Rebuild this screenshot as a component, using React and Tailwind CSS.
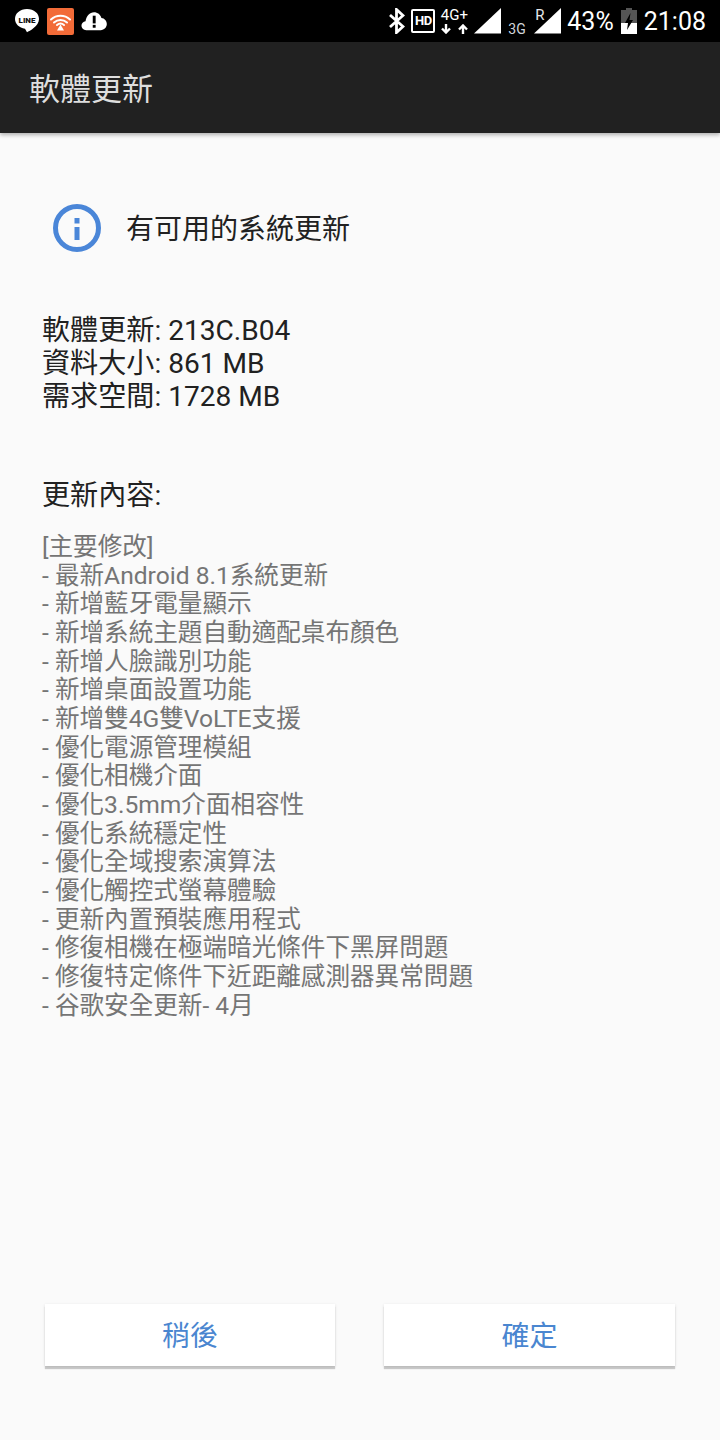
const fontCls = "font-['Roboto','Noto_Sans_CJK_TC',sans-serif]";

const changes = [
  "[主要修改]",
  "- 最新Android 8.1系統更新",
  "- 新增藍牙電量顯示",
  "- 新增系統主題自動適配桌布顏色",
  "- 新增人臉識別功能",
  "- 新增桌面設置功能",
  "- 新增雙4G雙VoLTE支援",
  "- 優化電源管理模組",
  "- 優化相機介面",
  "- 優化3.5mm介面相容性",
  "- 優化系統穩定性",
  "- 優化全域搜索演算法",
  "- 優化觸控式螢幕體驗",
  "- 更新內置預裝應用程式",
  "- 修復相機在極端暗光條件下黑屏問題",
  "- 修復特定條件下近距離感測器異常問題",
  "- 谷歌安全更新- 4月",
];

const buttonCls = "h-[62px] pt-[4px] bg-white text-[#4a86d0] text-[28px] shadow-[0_3px_1px_rgba(0,0,0,0.18),0_1px_3px_rgba(0,0,0,0.12)]";

function Signal() {
  return (
    <svg width="27" height="26" viewBox="0 0 27 26" className="shrink-0">
      <path d="M0 25.500L27 0v25.500z" fill="#fff" />
    </svg>
  );
}

function StatusBar() {
  return (
    <div className="h-[42px] bg-black flex items-center justify-between pl-[14px] pr-[14px] text-white">
      <div className="flex items-center gap-[7px]">
        {/* LINE bubble */}
        <svg width="26" height="26" viewBox="0 0 26 26">
          <path d="M13 1C6 1 1 5.400 1 11c0 5.200 4.300 8.800 10 9.700l2 3.600c2.500-1.400 12-6 12-13.300C25 5.400 20 1 13 1z" fill="#fff" />
          <text x="13" y="14.500" textAnchor="middle" fontSize="8" fontWeight="900" fill="#111" fontFamily="Roboto">LINE</text>
        </svg>
        {/* wifi app tile */}
        <svg width="27" height="27" viewBox="0 0 27 27">
          <rect width="27" height="27" rx="2" fill="#f26b38" />
          <path d="M4 11.500c5.500-5 13.500-5 19 0M7 14.500c3.800-3.300 9.200-3.300 13 0M10 17c2-1.700 5-1.700 7 0" fill="none" stroke="#fff" strokeWidth="2" strokeLinecap="round" />
          <path d="M13.500 16.500l3.500 6h-7z" fill="#fff" />
        </svg>
        {/* cloud with alert */}
        <svg width="26" height="20" viewBox="0 0 27 20">
          <path d="M5.500 19.500C2.500 19.500 0.500 17.300 0.500 14.800c0-2.400 1.800-4.300 4.200-4.600C5.700 4.600 9 1 13.500 1c3.700 0 6.800 2.500 7.700 6 3.200 0.300 5.600 2.900 5.600 6.200 0 3.500-2.800 6.300-6.300 6.300z" fill="#fff" />
          <rect x="12.200" y="4.500" width="3" height="8" fill="#000" />
          <rect x="12.200" y="14" width="3" height="3" fill="#000" />
        </svg>
      </div>
      <div className={`flex items-center ${fontCls}`}>
        {/* bluetooth */}
        <svg width="17" height="26" viewBox="0 0 17 26" className="mr-[6px]">
          <path d="M2 7l13 11.500-6.500 6V1.500l6.500 6L2 19" fill="none" stroke="#fff" strokeWidth="2.800" />
        </svg>
        <div className="w-[24px] h-[24px] border-2 border-white rounded-[2px] flex items-center justify-center text-[13px] font-bold tracking-[-0.5px] mr-[6px]">HD</div>
        <div className="flex flex-col items-center w-[26px] mr-[7px] leading-none">
          <span className="text-[15px] leading-[14px] font-normal">4G+</span>
          <div className="flex gap-[7px] mt-[2px]">
            {/* data arrows */}
            <svg width="10" height="10" viewBox="0 0 10 10">
              <path d="M5 0v8M1 4.500l4 4 4-4" fill="none" stroke="#fff" strokeWidth="2.400" />
            </svg>
            <svg width="10" height="10" viewBox="0 0 10 10">
              <path d="M5 10V2M1 5.500l4-4 4 4" fill="none" stroke="#fff" strokeWidth="2.400" />
            </svg>
          </div>
        </div>
        <Signal />
        <span className="w-[17px] ml-[7px] mr-[9px] text-[14px] self-end -mb-[2px] text-gray-300 leading-none">3G</span>
        <div className="relative w-[27px] h-[26px] mr-[6px]">
          <Signal />
          <span className="absolute left-[1px] top-[0px] text-[15px] leading-none text-gray-200">R</span>
        </div>
        <span className="text-[25px] leading-none mr-[7px]">43%</span>
        {/* battery charging */}
        <svg width="16" height="26" viewBox="0 0 16 26" className="mr-[7px]">
          <rect x="5" y="0" width="6" height="3" fill="#555" />
          <rect x="0" y="2" width="16" height="13" fill="#555" />
          <rect x="0" y="15" width="16" height="11" fill="#fff" />
          <path d="M9.500 5L4 15h3l-1 7 6-10H8.500z" fill="#000" />
        </svg>
        <span className="text-[25px] leading-none">21:08</span>
      </div>
    </div>
  );
}

export default function App() {
  return (
    <div className={`w-[720px] h-[1440px] bg-[#fafafa] flex flex-col ${fontCls}`}>
      <StatusBar />
      <header className="h-[91px] bg-[#212121] flex items-center pl-[29px] pt-[6px] shadow-[0_2px_4px_rgba(0,0,0,0.3)] text-[31px] text-[#dedede]">
        軟體更新
      </header>

      <main className="flex-1 flex flex-col">
        <div className="flex items-center mt-[69px] ml-[53px]">
          {/* info badge: ring with square dot and stem */}
          <svg width="48" height="48" viewBox="0 0 48 48" className="text-[#4a86d8]">
            <circle cx="24" cy="24" r="21.500" fill="none" stroke="currentColor" strokeWidth="5" />
            <rect x="21.500" y="14" width="5" height="5.500" fill="currentColor" />
            <rect x="21.500" y="23" width="5" height="13" fill="currentColor" />
          </svg>
          <span className="ml-[25px] pt-[4px] text-[28px] leading-[48px] text-[#212121]">有可用的系統更新</span>
        </div>

        <div className="mt-[60px] ml-[42px] text-[28.1px] leading-[33px] text-[#212121]">
          <p>軟體更新: 213C.B04</p>
          <p>資料大小: 861 MB</p>
          <p>需求空間: 1728 MB</p>
        </div>

        <p className="mt-[66px] ml-[42px] text-[28.1px] leading-[33px] text-[#212121]">更新內容:</p>

        <ul className="mt-[21px] ml-[42px] text-[24.6px] leading-[28.67px] text-[#757575]">
          {changes.map((line) => <li key={line}>{line}</li>)}
        </ul>

        <div className="mt-auto mb-[74px] flex justify-between pl-[45px] pr-[45px]">
          <button type="button" className={`w-[290px] ${buttonCls}`}>稍後</button>
          <button type="button" className={`w-[291px] ${buttonCls}`}>確定</button>
        </div>
      </main>
    </div>
  );
}
